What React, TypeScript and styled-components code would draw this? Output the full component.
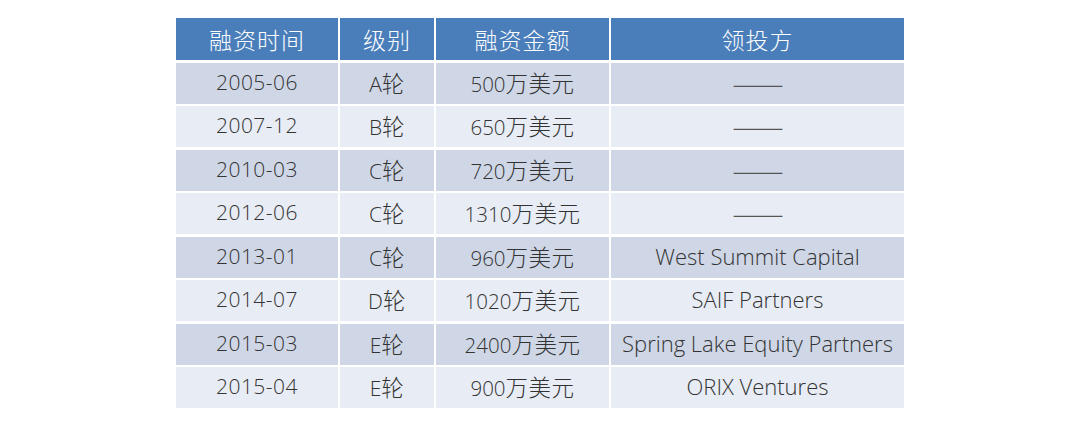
import React from 'react';
import styled, { createGlobalStyle } from 'styled-components';

const GlobalStyle = createGlobalStyle`
  body {
    margin: 0;
    background: #ffffff;
    font-family: 'Open Sans', 'Noto Sans CJK SC', sans-serif;
  }
`;

const Page = styled.main`
  width: 1080px;
  height: 435px;
  padding-top: 18px;
  box-sizing: border-box;
`;

const Table = styled.div`
  width: 728px;
  margin: 0 auto;
  display: grid;
  grid-template-columns: 162px 94px 173px 293px;
  grid-template-rows: 42px;
  grid-auto-rows: 41px;
  column-gap: 2px;
  row-gap: 2.5px;
  background: #ffffff;
`;

const HeadCell = styled.div`
  display: flex;
  align-items: center;
  justify-content: center;
  background: #4a7ebb;
  color: #ffffff;
  font-family: 'Noto Sans CJK SC', sans-serif;
  font-weight: 300;
  font-size: 23px;
  letter-spacing: 1px;
  margin-bottom: 0.5px;
`;

const Cell = styled.div<{ $odd: boolean; $size: number; $spacing: number }>`
  display: flex;
  align-items: baseline;
  justify-content: center;
  padding-top: 6px;
  box-sizing: border-box;
  background: ${(p) => (p.$odd ? '#cfd7e6' : '#e8ecf4')};
  color: #333333;
  font-family: 'Open Sans', 'Noto Sans CJK SC', sans-serif;
  font-weight: 300;
  font-size: ${(p) => p.$size}px;
  line-height: 26px;
  letter-spacing: ${(p) => p.$spacing}px;
  white-space: nowrap;
`;

const Unit = styled.span`
  font-family: 'Noto Sans CJK SC', sans-serif;
  font-weight: 300;
  font-size: 22.5px;
  letter-spacing: 0.5px;
`;

const Dash = styled.span`
  font-family: 'Noto Sans CJK SC', sans-serif;
  font-weight: 300;
  font-size: 31px;
  line-height: 26px;
  color: #555;
  letter-spacing: -1px;
`;

const headers = ['融资时间', '级别', '融资金额', '领投方'];

type Row = { date: string; round: string; amount: string; lead: string | null };

const rows: Row[] = [
  { date: '2005-06', round: 'A', amount: '500', lead: null },
  { date: '2007-12', round: 'B', amount: '650', lead: null },
  { date: '2010-03', round: 'C', amount: '720', lead: null },
  { date: '2012-06', round: 'C', amount: '1310', lead: null },
  { date: '2013-01', round: 'C', amount: '960', lead: 'West Summit Capital' },
  { date: '2014-07', round: 'D', amount: '1020', lead: 'SAIF Partners' },
  { date: '2015-03', round: 'E', amount: '2400', lead: 'Spring Lake Equity Partners' },
  { date: '2015-04', round: 'E', amount: '900', lead: 'ORIX Ventures' },
];

function App() {
  return (
    <Page>
      <GlobalStyle />
      <Table>
        {headers.map((h) => (
          <HeadCell key={h}>{h}</HeadCell>
        ))}
        {rows.map((r, i) => {
          const odd = i % 2 === 0;
          return (
            <React.Fragment key={r.date + r.amount}>
              <Cell $odd={odd} $size={21} $spacing={0.5}>{r.date}</Cell>
              <Cell $odd={odd} $size={21} $spacing={0}>
                {r.round}
                <Unit>轮</Unit>
              </Cell>
              <Cell $odd={odd} $size={20.5} $spacing={0}>
                {r.amount}
                <Unit>万美元</Unit>
              </Cell>
              <Cell $odd={odd} $size={22} $spacing={0}>
                {r.lead === null ? <Dash>——</Dash> : r.lead}
              </Cell>
            </React.Fragment>
          );
        })}
      </Table>
    </Page>
  );
}

export default App;
